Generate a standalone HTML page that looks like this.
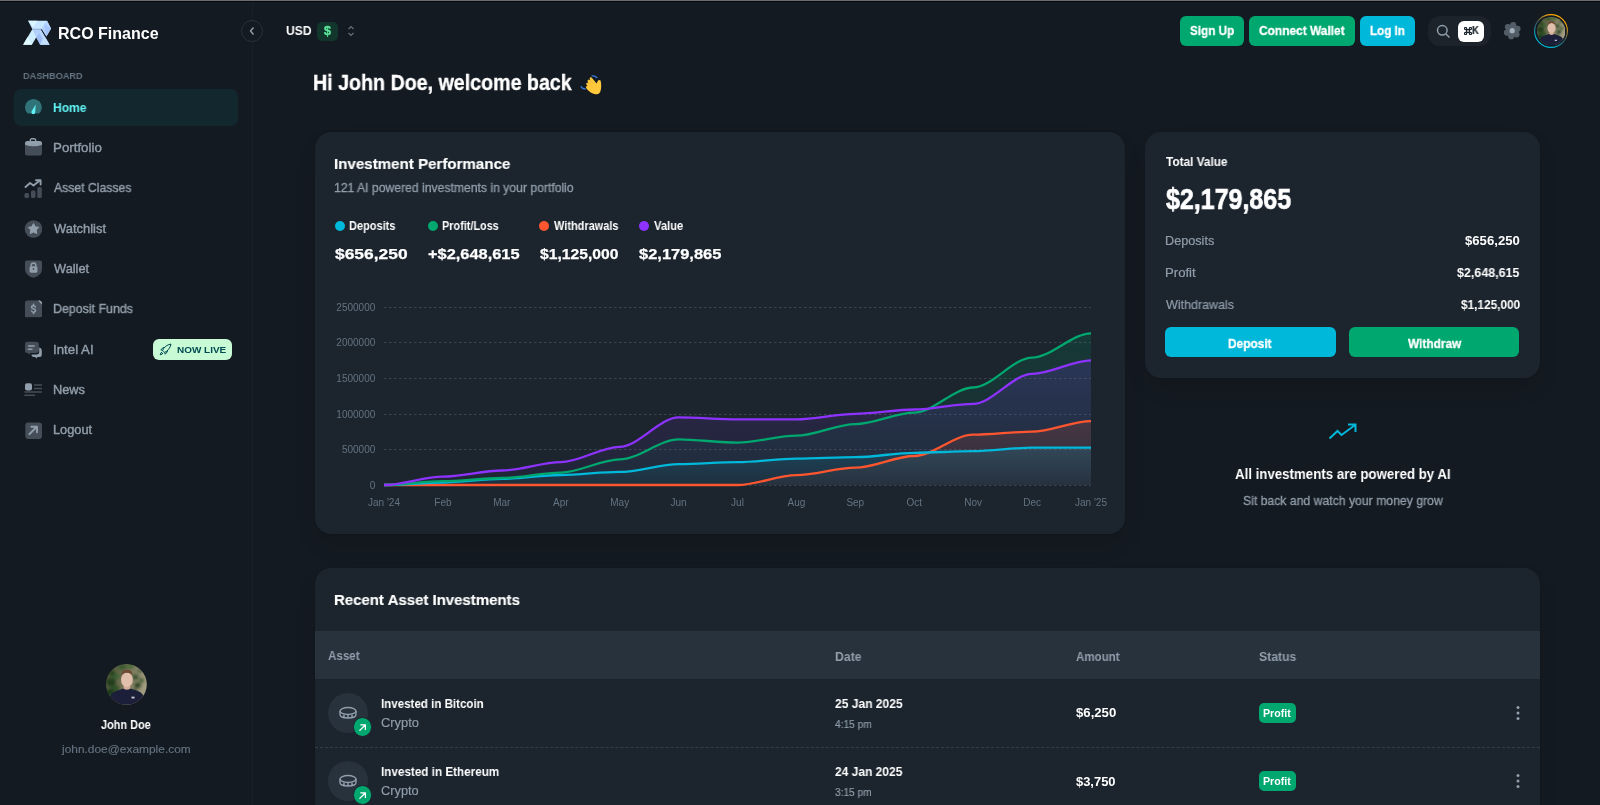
<!DOCTYPE html><html><head><meta charset="utf-8"><style>
*{box-sizing:border-box;margin:0;padding:0}
html,body{width:1600px;height:805px;overflow:hidden;background:#141A21;font-family:"Liberation Sans",sans-serif;color:#fff}
.abs{position:absolute}
.topline{position:absolute;left:0;top:0;width:1600px;height:1px;background:#6d6a67}
.side{position:absolute;left:0;top:0;width:253px;height:805px;border-right:1px solid #1a2027}
.logo-t{position:absolute;left:59px;top:24.4px;font-size:16px;font-weight:bold;color:#fff}
.dash{position:absolute;left:24px;top:68.5px;font-size:9.8px;font-weight:bold;color:#637381;transform:scaleX(0.93);transform-origin:0 0}
.nav{position:absolute;left:14px;width:224px;height:37px;border-radius:7px}
.nav.act{background:#13272F}
.nav .t{position:absolute;left:40px;top:11.8px;font-size:12.5px;color:#919EAB;white-space:nowrap;-webkit-text-stroke:0.25px #919EAB}
.nav.act .t{color:#61F3F3;font-weight:bold;-webkit-text-stroke:0}
.ico{position:absolute;left:24px}
.badge{position:absolute;left:139px;top:8px;width:79px;height:21px;border-radius:6px;background:#C8FAD6;color:#004B50;font-size:9.8px;font-weight:bold}
.main{position:absolute;left:253px;top:0}
.card{position:absolute;background:#1C252E;border-radius:16px;box-shadow:0 0 2px 0 rgba(0,0,0,0.2),0 12px 24px -4px rgba(0,0,0,0.12)}
.h1{position:absolute;left:314px;top:73px;font-size:20.5px;font-weight:bold;white-space:nowrap}
.btn{position:absolute;top:16px;height:30px;border-radius:6px;color:#fff;font-weight:bold;font-size:12.5px;text-align:center;line-height:30px}
.grey{color:#919EAB}
.nw{white-space:nowrap}
.tx{position:absolute;white-space:nowrap;line-height:1;transform-origin:0 0;will-change:transform}
</style></head><body><div class="side">
<svg class="abs" style="left:20px;top:17px" width="34" height="31" viewBox="20 17 34 31">
<path d="M28.1 20.85 H47 L51 28.6 L46.3 36.6 L41.4 29.1 H32.3Z" fill="#c8e6ff"/>
<path d="M41.4 29.1 L44.2 24.6 L47 20.85 L51 28.6 L46.3 36.6Z" fill="#b3d2ff"/>
<path d="M44.2 24.6 L51 28.6 L46.3 36.6 Z" fill="#a5c4fb"/>
<path d="M28.1 20.85 H37.5 L33.2 27.5Z" fill="#dcf6ff"/>
<path d="M32.3 29.3 H41 L31.9 44.7 H23.1Z" fill="#cfeefd"/>
<path d="M27.6 37 L31.9 44.7 H23.1Z" fill="#def9ff"/>
<path d="M32.3 29.3 H41 L49.6 44.7 H40.2 L36.6 38.2Z" fill="#b8d6ff"/>
<path d="M36.6 29.3 L41 29.3 L36.6 37.6 L32.5 29.3Z" fill="#b2cffb"/>
<path d="M36.6 37.6 L39.2 33 L42.4 38.5 L40.2 44.7Z" fill="#9fbdf5"/>
<path d="M45 37 L49.6 44.7 H40.2Z" fill="#c4e2ff"/>
<path d="M32 29.2 H41.3" stroke="#8aa0c0" stroke-width="0.7"/>
<path d="M41.4 29.4 L46.6 38" stroke="#141A21" stroke-width="1"/>
</svg>
<div class="nav act" style="top:89px"></div>
<div class="ico" style="top:98.4px"><svg width="18" height="18" viewBox="0 0 18 18"><path d="M3.8 15.6 A8.4 8.4 0 1 1 15 15.6 Z" fill="#61F3F3" opacity="0.38"/><path d="M11.7 6.6 L11.2 13.9 A1.9 1.9 0 1 1 7.8 13.1 Z" fill="#61F3F3"/></svg></div>
<div class="nav" style="top:129.3px"></div>
<div class="ico" style="top:138.3px"><svg width="18" height="18" viewBox="0 0 18 18"><path d="M6.3 3.2 V2.3 A1.5 1.5 0 0 1 7.8 0.8 H10.2 A1.5 1.5 0 0 1 11.7 2.3 V3.2" stroke="#919EAB" stroke-width="1.4" fill="none"/><rect x="1" y="3" width="17" height="14.5" rx="2.6" fill="#454E58"/><path d="M1 6.8 Q9.5 9.8 18 6.8 V5.6 A2.6 2.6 0 0 0 15.4 3 H3.6 A2.6 2.6 0 0 0 1 5.6Z" fill="#919EAB"/></svg></div>
<div class="nav" style="top:169.6px"></div>
<div class="ico" style="top:179.0px"><svg width="20" height="20" viewBox="0 0 20 20"><path d="M1.5 8 L6 4 L9.5 6.5 L15.5 1.8" stroke="#919EAB" stroke-width="1.9" fill="none" stroke-linecap="round" stroke-linejoin="round"/><path d="M12 1.3 H16.6 V5.5" stroke="#919EAB" stroke-width="1.9" fill="none" stroke-linecap="round" stroke-linejoin="round"/><rect x="0.5" y="14" width="4.5" height="5" rx="1.6" fill="#454E58"/><rect x="7" y="11.5" width="4.5" height="7.5" rx="1.6" fill="#454E58"/><rect x="13.3" y="8" width="4.5" height="11" rx="1.6" fill="#454E58"/></svg></div>
<div class="nav" style="top:210px"></div>
<div class="ico" style="top:220.0px"><svg width="18" height="18" viewBox="0 0 18 18"><circle cx="9.5" cy="9" r="8.8" fill="#454E58"/><path d="M9.5 3.6 L11.2 6.8 L14.8 7.4 L12.2 10 L12.8 13.6 L9.5 12 L6.2 13.6 L6.8 10 L4.2 7.4 L7.8 6.8Z" fill="#919EAB" stroke="#919EAB" stroke-width="1" stroke-linejoin="round"/></svg></div>
<div class="nav" style="top:250.3px"></div>
<div class="ico" style="top:260.0px"><svg width="18" height="18" viewBox="0 0 18 18"><path d="M3 0.4 H16 A2 2 0 0 1 18 2.4 V9 Q18 15.5 9.5 17.8 Q1 15.5 1 9 V2.4 A2 2 0 0 1 3 0.4Z" fill="#454E58"/><rect x="5.6" y="6.2" width="7.8" height="6.5" rx="1.4" fill="#919EAB"/><path d="M7.2 6.5 V5.3 A2.3 2.3 0 0 1 11.8 5.3 V6.5" stroke="#919EAB" stroke-width="1.5" fill="none"/><circle cx="9.5" cy="9" r="0.9" fill="#454E58"/></svg></div>
<div class="nav" style="top:290.6px"></div>
<div class="ico" style="top:300.3px"><svg width="18" height="18" viewBox="0 0 18 18"><path d="M3.5 0.6 H13.5 L18 5 V17.5 L16.8 16.8 L15.3 17.5 L13.8 16.8 L12.3 17.5 L10.8 16.8 L9.3 17.5 L7.8 16.8 L6.3 17.5 L4.8 16.8 L3.3 17.5 L2 16.8 L1 17.5 V3.1 A2.5 2.5 0 0 1 3.5 0.6Z" fill="#454E58"/><path d="M14 0.7 L18 4.7 V3.5 A3 3 0 0 0 15 0.6Z" fill="#919EAB"/><path d="M14 0.6 Q18 0.6 18 4.8 L14 0.6Z" fill="#919EAB"/><path d="M11.4 7 Q11 5.7 9.5 5.7 Q7.6 5.7 7.6 7.2 Q7.6 8.5 9.5 8.8 Q11.5 9.2 11.5 10.6 Q11.5 12.2 9.5 12.2 Q7.9 12.2 7.5 10.9 M9.5 4.3 V5.7 M9.5 12.2 V13.5" stroke="#919EAB" stroke-width="1.5" fill="none" stroke-linecap="round"/></svg></div>
<div class="nav" style="top:331px"><div class="badge"><svg class="abs" style="left:6px;top:4px" width="13" height="13" viewBox="0 0 13 13"><path d="M4.6 8.4 L3.6 7.4 Q5.5 2.5 12 1 Q10.5 7.5 5.6 9.4Z M3.6 7.4 L1.8 6.8 L4.2 4.6 L6.2 4.4 M5.6 9.4 L6.2 11.2 L8.4 8.8 L8.6 6.8 M3.2 9 Q1.5 9.5 1.2 11.8 Q3.5 11.5 4 9.8" stroke="#004B50" stroke-width="1" fill="none" stroke-linejoin="round"/></svg></div></div>
<div class="ico" style="top:340.5px"><svg width="18" height="18" viewBox="0 0 18 18"><path d="M3.5 0.8 H12 A3 3 0 0 1 15 3.8 V9 A3 3 0 0 1 12 12 H6.5 L5 13.8 L4 12 H3.5 A2.5 2.5 0 0 1 1 9.5 V3.3 A2.5 2.5 0 0 1 3.5 0.8Z" fill="#454E58"/><path d="M4.5 5 H10.2 M4.3 8.2 H8" stroke="#919EAB" stroke-width="1.5" stroke-linecap="round"/><path d="M15.2 6.5 Q17.8 7 17.8 9.5 V13.5 A2.5 2.5 0 0 1 15.3 16 H13.5 L12.3 17.5 L11.2 16 H10 A2.5 2.5 0 0 1 7.5 13.5 H12.5 A2.7 2.7 0 0 0 15.2 10.8Z" fill="#919EAB"/></svg></div>
<div class="nav" style="top:371.3px"></div>
<div class="ico" style="top:380.7px"><svg width="18" height="18" viewBox="0 0 18 18"><rect x="1" y="2.3" width="7" height="7.3" rx="2" fill="#919EAB"/><path d="M10.5 4.1 H17.8 M10.5 7.6 H17.8 M1 11.1 H17.8 M1 14.2 H10.5" stroke="#454E58" stroke-width="1.5" stroke-linecap="round"/></svg></div>
<div class="nav" style="top:411.6px"></div>
<div class="ico" style="top:421.7px"><svg width="18" height="18" viewBox="0 0 18 18"><rect x="1.3" y="0.4" width="16.7" height="16.6" rx="3" fill="#454E58"/><path d="M5.3 12.2 L12.8 4.8 M7.3 4.7 H13 V10.3" stroke="#919EAB" stroke-width="1.9" fill="none" stroke-linecap="round" stroke-linejoin="round"/></svg></div>
</div>
<svg class="abs" style="left:105.85px;top:664.0px" width="40.8" height="40.8" viewBox="0 0 40 40">
<defs><clipPath id="cp126"><circle cx="20" cy="20" r="20"/></clipPath><filter id="bl126" x="-10%" y="-10%" width="120%" height="120%"><feGaussianBlur stdDeviation="1.6"/></filter></defs>
<g clip-path="url(#cp126)"><defs><linearGradient id="ag126" x1="0" y1="0" x2="1" y2="0.3"><stop offset="0" stop-color="#3b4d2e"/><stop offset="0.5" stop-color="#6d6d50"/><stop offset="1" stop-color="#a8a286"/></linearGradient></defs><g filter="url(#bl126)"><rect x="-4" y="-4" width="48" height="48" fill="url(#ag126)"/>
<ellipse cx="5" cy="18" rx="5" ry="4.5" fill="#223c1c"/><ellipse cx="9" cy="24" rx="4.5" ry="3.5" fill="#2f5226"/><ellipse cx="4" cy="28" rx="4.5" ry="4" fill="#1f3a1a"/><ellipse cx="10" cy="12" rx="3.5" ry="3" fill="#3a6230"/><ellipse cx="13" cy="30" rx="3.5" ry="3" fill="#2b4a22"/><ellipse cx="6" cy="9" rx="3" ry="3" fill="#26421f"/><ellipse cx="16" cy="3" rx="4" ry="2.5" fill="#35582a"/><ellipse cx="24" cy="2.5" rx="4" ry="2" fill="#436a34"/><ellipse cx="29" cy="13" rx="3" ry="3" fill="#30502a"/><ellipse cx="31" cy="21" rx="3.5" ry="3" fill="#284422"/><ellipse cx="35" cy="16" rx="2.5" ry="2.5" fill="#3f5e32"/><ellipse cx="28" cy="27" rx="3" ry="2.5" fill="#304a26"/><ellipse cx="33" cy="7" rx="2.5" ry="2" fill="#4a633c"/></g>
<path d="M17.5 20 L17 25.5 Q20.5 27 24 25.5 L23.5 20Z" fill="#d2ab96"/>
<ellipse cx="20.5" cy="15.5" rx="5.8" ry="7.2" fill="#e0c0ad"/>
<path d="M15 12 Q14.5 5.5 20.5 5.5 Q26.5 5.5 26 12 Q25 8.8 20.5 8.6 Q16 8.8 15 12Z" fill="#6e4d36"/>
<path d="M2 40 Q3 28 10 26.5 L17 24 Q20.5 26.5 24 24 L31 26.5 Q38 28 39 40Z" fill="#1b1f3a"/>
<rect x="25" y="32" width="3" height="1.8" fill="#c9ccd6"/>
</g></svg>
<div class="abs" style="left:241px;top:20px;width:22px;height:22px;border-radius:50%;border:1px solid #28313a;background:#141A21"></div>
<svg class="abs" style="left:248px;top:26px" width="8" height="10" viewBox="0 0 8 10"><path d="M5.5 1.5 L2.5 5 L5.5 8.5" stroke="#919EAB" stroke-width="1.4" fill="none"/></svg>
<div class="abs" style="left:317px;top:22px;width:21px;height:19px;border-radius:5px;background:#12362b;color:#5BE49B;font-size:12.5px;font-weight:bold;text-align:center;line-height:19px;-webkit-text-stroke:0.4px #5BE49B;will-change:transform">$</div>
<svg class="abs" style="left:347px;top:25px" width="8" height="12" viewBox="0 0 8 12"><path d="M1.5 4 L4 1.5 L6.5 4 M1.5 8 L4 10.5 L6.5 8" stroke="#637381" stroke-width="1.2" fill="none"/></svg>
<div class="btn" style="left:1180px;width:64px;background:#00A76F"></div>
<div class="btn" style="left:1249px;width:106px;background:#00A76F"></div>
<div class="btn" style="left:1360px;width:55px;background:#00B8D9"></div>
<div class="abs" style="left:1428px;top:16px;width:63px;height:30px;border-radius:12px;background:#1C232B"></div>
<svg class="abs" style="left:1436px;top:24px" width="15" height="15" viewBox="0 0 15 15"><circle cx="6.3" cy="6.3" r="4.8" stroke="#919EAB" stroke-width="1.5" fill="none"/><path d="M10 10 L13.5 13.5" stroke="#919EAB" stroke-width="1.5"/></svg>
<div class="abs" style="left:1458px;top:21px;width:26px;height:21px;border-radius:6px;background:#fff"></div>
<svg class="abs" style="left:1463.5px;top:26.8px" width="8" height="8" viewBox="0 0 8 8"><path d="M2.6 2.6 H5.4 V5.4 H2.6 Z M2.6 2.6 V1.6 A1.1 1.1 0 1 0 1.6 2.6 H2.6 M5.4 2.6 V1.6 A1.1 1.1 0 1 1 6.4 2.6 H5.4 M5.4 5.4 V6.4 A1.1 1.1 0 1 0 6.4 5.4 H5.4 M2.6 5.4 V6.4 A1.1 1.1 0 1 1 1.6 5.4 H2.6" stroke="#1C252E" stroke-width="1.2" fill="none"/></svg>
<svg class="abs" style="left:1500px;top:19px" width="25" height="24" viewBox="1500 19 25 24"><g fill="#535d68"><circle cx="1513.17" cy="25.19" r="3.1"/><circle cx="1517.46" cy="28.78" r="3.1"/><circle cx="1516.49" cy="34.30" r="3.1"/><circle cx="1511.23" cy="36.21" r="3.1"/><circle cx="1506.94" cy="32.62" r="3.1"/><circle cx="1507.91" cy="27.10" r="3.1"/><circle cx="1512.2" cy="30.7" r="6"/></g><circle cx="1512.2" cy="30.7" r="2.6" fill="#A3AFBB"/></svg>
<svg class="abs" style="left:1534px;top:14px" width="34" height="34" viewBox="0 0 34 34"><defs><linearGradient id="rg" x1="0.8" y1="0" x2="0.2" y2="1"><stop offset="0.15" stop-color="#FFAB00"/><stop offset="0.5" stop-color="#3c5560"/><stop offset="0.85" stop-color="#00B8D9"/></linearGradient></defs><circle cx="17" cy="17" r="16.4" stroke="url(#rg)" stroke-width="1.1" fill="none"/></svg>
<svg class="abs" style="left:1536.8px;top:16.8px" width="28.4" height="28.4" viewBox="0 0 40 40">
<defs><clipPath id="cp1551"><circle cx="20" cy="20" r="20"/></clipPath><filter id="bl1551" x="-10%" y="-10%" width="120%" height="120%"><feGaussianBlur stdDeviation="1.6"/></filter></defs>
<g clip-path="url(#cp1551)"><defs><linearGradient id="ag1551" x1="0" y1="0" x2="1" y2="0.3"><stop offset="0" stop-color="#3b4d2e"/><stop offset="0.5" stop-color="#6d6d50"/><stop offset="1" stop-color="#a8a286"/></linearGradient></defs><g filter="url(#bl1551)"><rect x="-4" y="-4" width="48" height="48" fill="url(#ag1551)"/>
<ellipse cx="5" cy="18" rx="5" ry="4.5" fill="#223c1c"/><ellipse cx="9" cy="24" rx="4.5" ry="3.5" fill="#2f5226"/><ellipse cx="4" cy="28" rx="4.5" ry="4" fill="#1f3a1a"/><ellipse cx="10" cy="12" rx="3.5" ry="3" fill="#3a6230"/><ellipse cx="13" cy="30" rx="3.5" ry="3" fill="#2b4a22"/><ellipse cx="6" cy="9" rx="3" ry="3" fill="#26421f"/><ellipse cx="16" cy="3" rx="4" ry="2.5" fill="#35582a"/><ellipse cx="24" cy="2.5" rx="4" ry="2" fill="#436a34"/><ellipse cx="29" cy="13" rx="3" ry="3" fill="#30502a"/><ellipse cx="31" cy="21" rx="3.5" ry="3" fill="#284422"/><ellipse cx="35" cy="16" rx="2.5" ry="2.5" fill="#3f5e32"/><ellipse cx="28" cy="27" rx="3" ry="2.5" fill="#304a26"/><ellipse cx="33" cy="7" rx="2.5" ry="2" fill="#4a633c"/></g>
<path d="M17.5 20 L17 25.5 Q20.5 27 24 25.5 L23.5 20Z" fill="#d2ab96"/>
<ellipse cx="20.5" cy="15.5" rx="5.8" ry="7.2" fill="#e0c0ad"/>
<path d="M15 12 Q14.5 5.5 20.5 5.5 Q26.5 5.5 26 12 Q25 8.8 20.5 8.6 Q16 8.8 15 12Z" fill="#6e4d36"/>
<path d="M2 40 Q3 28 10 26.5 L17 24 Q20.5 26.5 24 24 L31 26.5 Q38 28 39 40Z" fill="#1b1f3a"/>
<rect x="25" y="32" width="3" height="1.8" fill="#c9ccd6"/>
</g></svg>
<svg class="abs" style="left:575px;top:70px" width="32" height="28" viewBox="575 70 32 28">
<path d="M596.8 94.2 C592.5 94.2 588.5 91.5 586.3 88.2 Q585.2 86.6 586.6 85.9 L587.6 86.3 L586.4 84.6 Q585.6 83 587.3 82.6 L588.5 83.4 L587.6 81.3 Q587.2 79.6 589 79.4 L590.3 80.6 L589.7 78.8 Q589.6 77 591.6 77.4 L596.6 83.6 L597.6 81.2 Q598.8 79.2 600.6 80.6 C601.4 84 601.6 89 600.2 92 Q599 94.2 596.8 94.2Z" fill="#FFC83D"/>
<path d="M588.6 83.6 L592.2 86.6 M590.3 80.8 L593.6 84.2" stroke="#F2A72A" stroke-width="0.7" fill="none" opacity="0.7"/>
<path d="M591.5 76 Q595 75.4 597.3 78" stroke="#3B7BE0" stroke-width="1.2" fill="none"/>
<path d="M580.8 86.4 Q582.5 89.2 586 89" stroke="#3B7BE0" stroke-width="1.2" fill="none"/>
</svg>
<div class="card" style="left:315px;top:132px;width:810px;height:402px"></div>
<div class="abs" style="left:335px;top:221px;width:10px;height:10px;border-radius:50%;background:#00B8D9"></div>
<div class="abs" style="left:428px;top:221px;width:10px;height:10px;border-radius:50%;background:#00A76F"></div>
<div class="abs" style="left:539px;top:221px;width:10px;height:10px;border-radius:50%;background:#FF5630"></div>
<div class="abs" style="left:639px;top:221px;width:10px;height:10px;border-radius:50%;background:#8E33FF"></div>
<svg class="abs" style="left:0;top:0" width="1600" height="805" viewBox="0 0 1600 805"><defs><linearGradient id="gP" x1="0" y1="0" x2="0" y2="1"><stop offset="0" stop-color="#8E33FF" stop-opacity="0.16"/><stop offset="1" stop-color="#8E33FF" stop-opacity="0.04"/></linearGradient><linearGradient id="gG" x1="0" y1="0" x2="0" y2="1"><stop offset="0" stop-color="#00A76F" stop-opacity="0.16"/><stop offset="1" stop-color="#00A76F" stop-opacity="0.04"/></linearGradient><linearGradient id="gC" x1="0" y1="0" x2="0" y2="1"><stop offset="0" stop-color="#00B8D9" stop-opacity="0.16"/><stop offset="1" stop-color="#00B8D9" stop-opacity="0.04"/></linearGradient><linearGradient id="gR" x1="0" y1="0" x2="0" y2="1"><stop offset="0" stop-color="#FF5630" stop-opacity="0.16"/><stop offset="1" stop-color="#FF5630" stop-opacity="0.04"/></linearGradient></defs><line x1="384" y1="307.5" x2="1091" y2="307.5" stroke="#3a444e" stroke-width="1" stroke-dasharray="2.5 2.5"/><text x="375.3" y="310.6" text-anchor="end" font-size="10" fill="#637381" font-family="Liberation Sans">2500000</text><line x1="384" y1="342.5" x2="1091" y2="342.5" stroke="#3a444e" stroke-width="1" stroke-dasharray="2.5 2.5"/><text x="375.3" y="345.6" text-anchor="end" font-size="10" fill="#637381" font-family="Liberation Sans">2000000</text><line x1="384" y1="378.5" x2="1091" y2="378.5" stroke="#3a444e" stroke-width="1" stroke-dasharray="2.5 2.5"/><text x="375.3" y="381.6" text-anchor="end" font-size="10" fill="#637381" font-family="Liberation Sans">1500000</text><line x1="384" y1="414.5" x2="1091" y2="414.5" stroke="#3a444e" stroke-width="1" stroke-dasharray="2.5 2.5"/><text x="375.3" y="417.6" text-anchor="end" font-size="10" fill="#637381" font-family="Liberation Sans">1000000</text><line x1="384" y1="449.5" x2="1091" y2="449.5" stroke="#3a444e" stroke-width="1" stroke-dasharray="2.5 2.5"/><text x="375.3" y="452.6" text-anchor="end" font-size="10" fill="#637381" font-family="Liberation Sans">500000</text><line x1="384" y1="485.5" x2="1091" y2="485.5" stroke="#3a444e" stroke-width="1" stroke-dasharray="2.5 2.5"/><text x="375.3" y="488.6" text-anchor="end" font-size="10" fill="#637381" font-family="Liberation Sans">0</text><text x="384.0" y="505.5" text-anchor="middle" font-size="10" fill="#637381" font-family="Liberation Sans">Jan '24</text><text x="442.9" y="505.5" text-anchor="middle" font-size="10" fill="#637381" font-family="Liberation Sans">Feb</text><text x="501.8" y="505.5" text-anchor="middle" font-size="10" fill="#637381" font-family="Liberation Sans">Mar</text><text x="560.8" y="505.5" text-anchor="middle" font-size="10" fill="#637381" font-family="Liberation Sans">Apr</text><text x="619.7" y="505.5" text-anchor="middle" font-size="10" fill="#637381" font-family="Liberation Sans">May</text><text x="678.6" y="505.5" text-anchor="middle" font-size="10" fill="#637381" font-family="Liberation Sans">Jun</text><text x="737.5" y="505.5" text-anchor="middle" font-size="10" fill="#637381" font-family="Liberation Sans">Jul</text><text x="796.4" y="505.5" text-anchor="middle" font-size="10" fill="#637381" font-family="Liberation Sans">Aug</text><text x="855.3" y="505.5" text-anchor="middle" font-size="10" fill="#637381" font-family="Liberation Sans">Sep</text><text x="914.2" y="505.5" text-anchor="middle" font-size="10" fill="#637381" font-family="Liberation Sans">Oct</text><text x="973.2" y="505.5" text-anchor="middle" font-size="10" fill="#637381" font-family="Liberation Sans">Nov</text><text x="1032.1" y="505.5" text-anchor="middle" font-size="10" fill="#637381" font-family="Liberation Sans">Dec</text><text x="1091.0" y="505.5" text-anchor="middle" font-size="10" fill="#637381" font-family="Liberation Sans">Jan '25</text><path d="M384.0 485.0 C402.9 485.0 424.1 481.2 442.9 481.2 C461.8 481.2 483.0 478.0 501.8 478.0 C520.7 478.0 541.9 472.6 560.8 472.6 C579.6 472.6 600.8 459.4 619.7 459.4 C638.5 459.4 659.7 439.4 678.6 439.4 C697.4 439.4 718.6 442.6 737.5 442.6 C756.4 442.6 777.6 435.7 796.4 435.7 C815.3 435.7 836.5 424.1 855.3 424.1 C874.2 424.1 895.4 412.6 914.2 412.6 C933.1 412.6 954.3 387.5 973.2 387.5 C992.0 387.5 1013.2 357.6 1032.1 357.6 C1050.9 357.6 1072.1 333.3 1091.0 333.3 L1091 485 L384 485 Z" fill="url(#gG)"/><path d="M384.0 485.0 C402.9 485.0 424.1 476.6 442.9 476.6 C461.8 476.6 483.0 470.5 501.8 470.5 C520.7 470.5 541.9 462.1 560.8 462.1 C579.6 462.1 600.8 446.8 619.7 446.8 C638.5 446.8 659.7 417.4 678.6 417.4 C697.4 417.4 718.6 419.4 737.5 419.4 C756.4 419.4 777.6 419.4 796.4 419.4 C815.3 419.4 836.5 413.8 855.3 413.8 C874.2 413.8 895.4 409.5 914.2 409.5 C933.1 409.5 954.3 403.8 973.2 403.8 C992.0 403.8 1013.2 373.9 1032.1 373.9 C1050.9 373.9 1072.1 360.4 1091.0 360.4 L1091 485 L384 485 Z" fill="url(#gP)"/><path d="M384.0 485.0 C402.9 485.0 424.1 485.0 442.9 485.0 C461.8 485.0 483.0 485.0 501.8 485.0 C520.7 485.0 541.9 485.0 560.8 485.0 C579.6 485.0 600.8 485.0 619.7 485.0 C638.5 485.0 659.7 485.0 678.6 485.0 C697.4 485.0 718.6 485.0 737.5 485.0 C756.4 485.0 777.6 475.2 796.4 475.2 C815.3 475.2 836.5 467.7 855.3 467.7 C874.2 467.7 895.4 456.0 914.2 456.0 C933.1 456.0 954.3 434.7 973.2 434.7 C992.0 434.7 1013.2 431.7 1032.1 431.7 C1050.9 431.7 1072.1 421.1 1091.0 421.1 L1091 485 L384 485 Z" fill="url(#gR)"/><path d="M384.0 485.0 C402.9 485.0 424.1 482.5 442.9 482.5 C461.8 482.5 483.0 478.9 501.8 478.9 C520.7 478.9 541.9 475.0 560.8 475.0 C579.6 475.0 600.8 471.9 619.7 471.9 C638.5 471.9 659.7 464.1 678.6 464.1 C697.4 464.1 718.6 462.1 737.5 462.1 C756.4 462.1 777.6 458.6 796.4 458.6 C815.3 458.6 836.5 457.2 855.3 457.2 C874.2 457.2 895.4 452.8 914.2 452.8 C933.1 452.8 954.3 451.2 973.2 451.2 C992.0 451.2 1013.2 447.6 1032.1 447.6 C1050.9 447.6 1072.1 447.6 1091.0 447.6 L1091 485 L384 485 Z" fill="url(#gC)"/><path d="M384.0 485.0 C402.9 485.0 424.1 485.0 442.9 485.0 C461.8 485.0 483.0 485.0 501.8 485.0 C520.7 485.0 541.9 485.0 560.8 485.0 C579.6 485.0 600.8 485.0 619.7 485.0 C638.5 485.0 659.7 485.0 678.6 485.0 C697.4 485.0 718.6 485.0 737.5 485.0 C756.4 485.0 777.6 475.2 796.4 475.2 C815.3 475.2 836.5 467.7 855.3 467.7 C874.2 467.7 895.4 456.0 914.2 456.0 C933.1 456.0 954.3 434.7 973.2 434.7 C992.0 434.7 1013.2 431.7 1032.1 431.7 C1050.9 431.7 1072.1 421.1 1091.0 421.1" stroke="#FF5630" stroke-width="2.3" fill="none"/><path d="M384.0 485.0 C402.9 485.0 424.1 482.5 442.9 482.5 C461.8 482.5 483.0 478.9 501.8 478.9 C520.7 478.9 541.9 475.0 560.8 475.0 C579.6 475.0 600.8 471.9 619.7 471.9 C638.5 471.9 659.7 464.1 678.6 464.1 C697.4 464.1 718.6 462.1 737.5 462.1 C756.4 462.1 777.6 458.6 796.4 458.6 C815.3 458.6 836.5 457.2 855.3 457.2 C874.2 457.2 895.4 452.8 914.2 452.8 C933.1 452.8 954.3 451.2 973.2 451.2 C992.0 451.2 1013.2 447.6 1032.1 447.6 C1050.9 447.6 1072.1 447.6 1091.0 447.6" stroke="#00B8D9" stroke-width="2.3" fill="none"/><path d="M384.0 485.0 C402.9 485.0 424.1 481.2 442.9 481.2 C461.8 481.2 483.0 478.0 501.8 478.0 C520.7 478.0 541.9 472.6 560.8 472.6 C579.6 472.6 600.8 459.4 619.7 459.4 C638.5 459.4 659.7 439.4 678.6 439.4 C697.4 439.4 718.6 442.6 737.5 442.6 C756.4 442.6 777.6 435.7 796.4 435.7 C815.3 435.7 836.5 424.1 855.3 424.1 C874.2 424.1 895.4 412.6 914.2 412.6 C933.1 412.6 954.3 387.5 973.2 387.5 C992.0 387.5 1013.2 357.6 1032.1 357.6 C1050.9 357.6 1072.1 333.3 1091.0 333.3" stroke="#00A76F" stroke-width="2.3" fill="none"/><path d="M384.0 485.0 C402.9 485.0 424.1 476.6 442.9 476.6 C461.8 476.6 483.0 470.5 501.8 470.5 C520.7 470.5 541.9 462.1 560.8 462.1 C579.6 462.1 600.8 446.8 619.7 446.8 C638.5 446.8 659.7 417.4 678.6 417.4 C697.4 417.4 718.6 419.4 737.5 419.4 C756.4 419.4 777.6 419.4 796.4 419.4 C815.3 419.4 836.5 413.8 855.3 413.8 C874.2 413.8 895.4 409.5 914.2 409.5 C933.1 409.5 954.3 403.8 973.2 403.8 C992.0 403.8 1013.2 373.9 1032.1 373.9 C1050.9 373.9 1072.1 360.4 1091.0 360.4" stroke="#8E33FF" stroke-width="2.3" fill="none"/></svg>
<div class="card" style="left:1145px;top:132px;width:395px;height:246px"></div>
<div class="btn" style="left:1165px;top:327px;width:171px;background:#00B8D9"></div>
<div class="btn" style="left:1349px;top:327px;width:170px;background:#00A76F"></div>
<svg class="abs" style="left:1328px;top:423px" width="30" height="18" viewBox="0 0 30 18"><path d="M1.5 15.5 L9.5 8 L13.5 12 L27 2 M20 1.5 H27.5 V9" stroke="#00B8D9" stroke-width="2" fill="none"/></svg>
<div class="card" style="left:315px;top:568px;width:1225px;height:300px;overflow:hidden"><div class="abs" style="left:0;top:63px;width:1225px;height:48px;background:#28323D"></div><div class="abs" style="left:0;top:179px;width:1225px;border-top:1px dashed #333d48"></div></div>
<div class="abs" style="left:328px;top:693px;width:40px;height:40px;border-radius:50%;background:#28323D"></div>
<svg class="abs" style="left:338px;top:706.2px" width="20" height="14" viewBox="0 0 20 14"><ellipse cx="10" cy="5" rx="8" ry="3.5" stroke="#919EAB" stroke-width="1.4" fill="none"/><path d="M2 5 V8.5 Q2 12 10 12 Q18 12 18 8.5 V5 M6 8.5 V11.5 M10 9 V12 M14 8.5 V11.5" stroke="#919EAB" stroke-width="1.4" fill="none"/></svg>
<div class="abs" style="left:352.8px;top:717.4px;width:19.4px;height:19.4px;border-radius:50%;background:#00A76F;border:1.2px solid #1C252E"></div>
<svg class="abs" style="left:357px;top:721.5px" width="11" height="11" viewBox="0 0 11 11"><path d="M2.8 8.4 L8.2 3 M3.8 2.8 H8.4 V7.4" stroke="#fff" stroke-width="1.3" fill="none" stroke-linecap="round" stroke-linejoin="round"/></svg>
<div class="abs" style="left:1259px;top:703px;width:37px;height:20px;border-radius:5px;background:#00A76F;color:#fff;font-size:10.5px;font-weight:bold;text-align:center;line-height:20px"></div>
<svg class="abs" style="left:1516px;top:705px" width="4" height="16" viewBox="0 0 4 16"><circle cx="2" cy="2.5" r="1.5" fill="#919EAB"/><circle cx="2" cy="8" r="1.5" fill="#919EAB"/><circle cx="2" cy="13.5" r="1.5" fill="#919EAB"/></svg>
<div class="abs" style="left:328px;top:761px;width:40px;height:40px;border-radius:50%;background:#28323D"></div>
<svg class="abs" style="left:338px;top:774.2px" width="20" height="14" viewBox="0 0 20 14"><ellipse cx="10" cy="5" rx="8" ry="3.5" stroke="#919EAB" stroke-width="1.4" fill="none"/><path d="M2 5 V8.5 Q2 12 10 12 Q18 12 18 8.5 V5 M6 8.5 V11.5 M10 9 V12 M14 8.5 V11.5" stroke="#919EAB" stroke-width="1.4" fill="none"/></svg>
<div class="abs" style="left:352.8px;top:785.4px;width:19.4px;height:19.4px;border-radius:50%;background:#00A76F;border:1.2px solid #1C252E"></div>
<svg class="abs" style="left:357px;top:789.5px" width="11" height="11" viewBox="0 0 11 11"><path d="M2.8 8.4 L8.2 3 M3.8 2.8 H8.4 V7.4" stroke="#fff" stroke-width="1.3" fill="none" stroke-linecap="round" stroke-linejoin="round"/></svg>
<div class="abs" style="left:1259px;top:771px;width:37px;height:20px;border-radius:5px;background:#00A76F;color:#fff;font-size:10.5px;font-weight:bold;text-align:center;line-height:20px"></div>
<svg class="abs" style="left:1516px;top:773px" width="4" height="16" viewBox="0 0 4 16"><circle cx="2" cy="2.5" r="1.5" fill="#919EAB"/><circle cx="2" cy="8" r="1.5" fill="#919EAB"/><circle cx="2" cy="13.5" r="1.5" fill="#919EAB"/></svg>
<div class="tx" style="left:57.75px;top:25.76px;font-size:15.64px;font-weight:bold;color:#FFFFFF;transform:scaleX(1.0247);">RCO Finance</div>
<div class="tx" style="left:23.18px;top:70.58px;font-size:9.96px;font-weight:bold;color:#637381;transform:scaleX(0.9217);">DASHBOARD</div>
<div class="tx" style="left:53.00px;top:101.69px;font-size:12.66px;font-weight:bold;color:#61F3F3;transform:scaleX(0.9542);">Home</div>
<div class="tx" style="left:52.96px;top:142.07px;font-size:12.80px;font-weight:normal;color:#919EAB;transform:scaleX(1.0399);-webkit-text-stroke:0.4px #919EAB;">Portfolio</div>
<div class="tx" style="left:54.00px;top:182.47px;font-size:12.80px;font-weight:normal;color:#919EAB;transform:scaleX(0.9542);-webkit-text-stroke:0.4px #919EAB;">Asset Classes</div>
<div class="tx" style="left:53.90px;top:222.77px;font-size:12.80px;font-weight:normal;color:#919EAB;transform:scaleX(1.0119);-webkit-text-stroke:0.4px #919EAB;">Watchlist</div>
<div class="tx" style="left:53.90px;top:263.17px;font-size:12.80px;font-weight:normal;color:#919EAB;transform:scaleX(1.0020);-webkit-text-stroke:0.4px #919EAB;">Wallet</div>
<div class="tx" style="left:53.03px;top:303.47px;font-size:12.80px;font-weight:normal;color:#919EAB;transform:scaleX(0.9688);-webkit-text-stroke:0.4px #919EAB;">Deposit Funds</div>
<div class="tx" style="left:52.96px;top:343.77px;font-size:12.80px;font-weight:normal;color:#919EAB;transform:scaleX(1.0375);-webkit-text-stroke:0.4px #919EAB;">Intel AI</div>
<div class="tx" style="left:53.01px;top:384.17px;font-size:12.80px;font-weight:normal;color:#919EAB;transform:scaleX(0.9900);-webkit-text-stroke:0.4px #919EAB;">News</div>
<div class="tx" style="left:53.00px;top:424.47px;font-size:12.80px;font-weight:normal;color:#919EAB;transform:scaleX(1.0002);-webkit-text-stroke:0.4px #919EAB;">Logout</div>
<div class="tx" style="left:176.58px;top:345.30px;font-size:9.81px;font-weight:bold;color:#004B50;transform:scaleX(1.0158);">NOW LIVE</div>
<div class="tx" style="left:101.00px;top:718.77px;font-size:12.09px;font-weight:bold;color:#FFFFFF;transform:scaleX(0.9037);">John Doe</div>
<div class="tx" style="left:61.87px;top:743.87px;font-size:11.38px;font-weight:normal;color:#637381;transform:scaleX(1.0478);-webkit-text-stroke:0.15px #637381;">john.doe@example.com</div>
<div class="tx" style="left:285.83px;top:25.31px;font-size:12.52px;font-weight:bold;color:#FFFFFF;transform:scaleX(0.9644);">USD</div>
<div class="tx" style="left:1190.12px;top:25.37px;font-size:12.80px;font-weight:bold;color:#FFFFFF;transform:scaleX(0.9155);-webkit-text-stroke:0.3px #FFFFFF;">Sign Up</div>
<div class="tx" style="left:1259.43px;top:25.37px;font-size:12.80px;font-weight:bold;color:#FFFFFF;transform:scaleX(0.9310);-webkit-text-stroke:0.3px #FFFFFF;">Connect Wallet</div>
<div class="tx" style="left:1370.07px;top:25.37px;font-size:12.80px;font-weight:bold;color:#FFFFFF;transform:scaleX(0.9089);-webkit-text-stroke:0.3px #FFFFFF;">Log In</div>
<div class="tx" style="left:1471.62px;top:26.14px;font-size:10.24px;font-weight:bold;color:#1C252E;transform:scaleX(0.9077);-webkit-text-stroke:0.2px #1C252E;">K</div>
<div class="tx" style="left:313.47px;top:73.13px;font-size:21.48px;font-weight:bold;color:#FFFFFF;transform:scaleX(0.9150);-webkit-text-stroke:0.35px #FFFFFF;">Hi John Doe, welcome back</div>
<div class="tx" style="left:334.06px;top:156.39px;font-size:15.50px;font-weight:bold;color:#FFFFFF;transform:scaleX(0.9746);-webkit-text-stroke:0.15px #FFFFFF;">Investment Performance</div>
<div class="tx" style="left:334.24px;top:182.47px;font-size:12.44px;font-weight:normal;color:#919EAB;transform:scaleX(0.9792);-webkit-text-stroke:0.3px #919EAB;">121 AI powered investments in your portfolio</div>
<div class="tx" style="left:348.71px;top:220.27px;font-size:12.09px;font-weight:bold;color:#FFFFFF;transform:scaleX(0.9105);">Deposits</div>
<div class="tx" style="left:442.42px;top:220.27px;font-size:12.09px;font-weight:bold;color:#FFFFFF;transform:scaleX(0.8992);">Profit/Loss</div>
<div class="tx" style="left:554.40px;top:220.27px;font-size:12.09px;font-weight:bold;color:#FFFFFF;transform:scaleX(0.9079);">Withdrawals</div>
<div class="tx" style="left:653.75px;top:220.27px;font-size:12.09px;font-weight:bold;color:#FFFFFF;transform:scaleX(0.9270);">Value</div>
<div class="tx" style="left:335.00px;top:245.85px;font-size:15.08px;font-weight:bold;color:#FFFFFF;transform:scaleX(1.1547);-webkit-text-stroke:0.25px #FFFFFF;">$656,250</div>
<div class="tx" style="left:427.59px;top:245.85px;font-size:15.08px;font-weight:bold;color:#FFFFFF;transform:scaleX(1.0868);-webkit-text-stroke:0.25px #FFFFFF;">+$2,648,615</div>
<div class="tx" style="left:539.75px;top:245.85px;font-size:15.08px;font-weight:bold;color:#FFFFFF;transform:scaleX(1.0389);-webkit-text-stroke:0.25px #FFFFFF;">$1,125,000</div>
<div class="tx" style="left:639.00px;top:245.85px;font-size:15.08px;font-weight:bold;color:#FFFFFF;transform:scaleX(1.0922);-webkit-text-stroke:0.25px #FFFFFF;">$2,179,865</div>
<div class="tx" style="left:1165.50px;top:156.69px;font-size:11.95px;font-weight:bold;color:#FFFFFF;transform:scaleX(0.9889);">Total Value</div>
<div class="tx" style="left:1165.50px;top:184.78px;font-size:28.87px;font-weight:bold;color:#FFFFFF;transform:scaleX(0.8659);-webkit-text-stroke:0.7px #FFFFFF;">$2,179,865</div>
<div class="tx" style="left:1164.62px;top:234.89px;font-size:12.66px;font-weight:normal;color:#919EAB;transform:scaleX(0.9903);-webkit-text-stroke:0.2px #919EAB;">Deposits</div>
<div class="tx" style="left:1164.57px;top:266.89px;font-size:12.66px;font-weight:normal;color:#919EAB;transform:scaleX(1.0386);-webkit-text-stroke:0.2px #919EAB;">Profit</div>
<div class="tx" style="left:1165.60px;top:298.89px;font-size:12.66px;font-weight:normal;color:#919EAB;transform:scaleX(0.9878);-webkit-text-stroke:0.2px #919EAB;">Withdrawals</div>
<div class="tx" style="left:1465.10px;top:234.89px;font-size:12.66px;font-weight:bold;color:#FFFFFF;transform:scaleX(1.0386);">$656,250</div>
<div class="tx" style="left:1457.30px;top:266.89px;font-size:12.66px;font-weight:bold;color:#FFFFFF;transform:scaleX(0.9852);">$2,648,615</div>
<div class="tx" style="left:1460.70px;top:298.89px;font-size:12.66px;font-weight:bold;color:#FFFFFF;transform:scaleX(0.9342);">$1,125,000</div>
<div class="tx" style="left:1228.16px;top:336.61px;font-size:13.23px;font-weight:bold;color:#FFFFFF;transform:scaleX(0.8990);-webkit-text-stroke:0.3px #FFFFFF;">Deposit</div>
<div class="tx" style="left:1407.90px;top:336.61px;font-size:13.23px;font-weight:bold;color:#FFFFFF;transform:scaleX(0.8983);-webkit-text-stroke:0.3px #FFFFFF;">Withdraw</div>
<div class="tx" style="left:1234.79px;top:467.47px;font-size:14.93px;font-weight:bold;color:#FFFFFF;transform:scaleX(0.8895);">All investments are powered by AI</div>
<div class="tx" style="left:1242.52px;top:494.97px;font-size:12.80px;font-weight:normal;color:#919EAB;transform:scaleX(0.9549);-webkit-text-stroke:0.3px #919EAB;">Sit back and watch your money grow</div>
<div class="tx" style="left:334.06px;top:592.32px;font-size:15.29px;font-weight:bold;color:#FFFFFF;transform:scaleX(0.9801);-webkit-text-stroke:0.15px #FFFFFF;">Recent Asset Investments</div>
<div class="tx" style="left:327.92px;top:650.47px;font-size:12.44px;font-weight:bold;color:#919EAB;transform:scaleX(0.9305);">Asset</div>
<div class="tx" style="left:834.84px;top:650.57px;font-size:12.44px;font-weight:bold;color:#919EAB;transform:scaleX(0.9812);">Date</div>
<div class="tx" style="left:1076.22px;top:650.57px;font-size:12.44px;font-weight:bold;color:#919EAB;transform:scaleX(0.9263);">Amount</div>
<div class="tx" style="left:1258.81px;top:650.57px;font-size:12.44px;font-weight:bold;color:#919EAB;transform:scaleX(0.9830);">Status</div>
<div class="tx" style="left:380.88px;top:698.05px;font-size:12.94px;font-weight:bold;color:#FFFFFF;transform:scaleX(0.8933);">Invested in Bitcoin</div>
<div class="tx" style="left:381.30px;top:716.87px;font-size:12.44px;font-weight:normal;color:#919EAB;transform:scaleX(1.0361);-webkit-text-stroke:0.15px #919EAB;">Crypto</div>
<div class="tx" style="left:834.87px;top:698.15px;font-size:12.94px;font-weight:bold;color:#FFFFFF;transform:scaleX(0.9312);">25 Jan 2025</div>
<div class="tx" style="left:835.09px;top:719.28px;font-size:10.67px;font-weight:normal;color:#919EAB;transform:scaleX(0.9518);-webkit-text-stroke:0.15px #919EAB;">4:15 pm</div>
<div class="tx" style="left:1076.20px;top:707.39px;font-size:12.66px;font-weight:bold;color:#FFFFFF;transform:scaleX(1.0392);">$6,250</div>
<div class="tx" style="left:1263.23px;top:708.28px;font-size:10.67px;font-weight:bold;color:#FFFFFF;transform:scaleX(0.9989);">Profit</div>
<div class="tx" style="left:381.17px;top:766.45px;font-size:12.94px;font-weight:bold;color:#FFFFFF;transform:scaleX(0.9037);">Invested in Ethereum</div>
<div class="tx" style="left:381.30px;top:784.97px;font-size:12.44px;font-weight:normal;color:#919EAB;transform:scaleX(1.0291);-webkit-text-stroke:0.15px #919EAB;">Crypto</div>
<div class="tx" style="left:834.93px;top:766.15px;font-size:12.94px;font-weight:bold;color:#FFFFFF;transform:scaleX(0.9270);">24 Jan 2025</div>
<div class="tx" style="left:834.98px;top:787.38px;font-size:10.67px;font-weight:normal;color:#919EAB;transform:scaleX(0.9480);-webkit-text-stroke:0.15px #919EAB;">3:15 pm</div>
<div class="tx" style="left:1076.40px;top:775.79px;font-size:12.66px;font-weight:bold;color:#FFFFFF;transform:scaleX(1.0209);">$3,750</div>
<div class="tx" style="left:1263.23px;top:776.28px;font-size:10.67px;font-weight:bold;color:#FFFFFF;transform:scaleX(0.9989);">Profit</div>
<div class="topline"></div><div class="abs" style="left:0;top:1px;width:1600px;height:1px;background:#060b13"></div></body></html>
